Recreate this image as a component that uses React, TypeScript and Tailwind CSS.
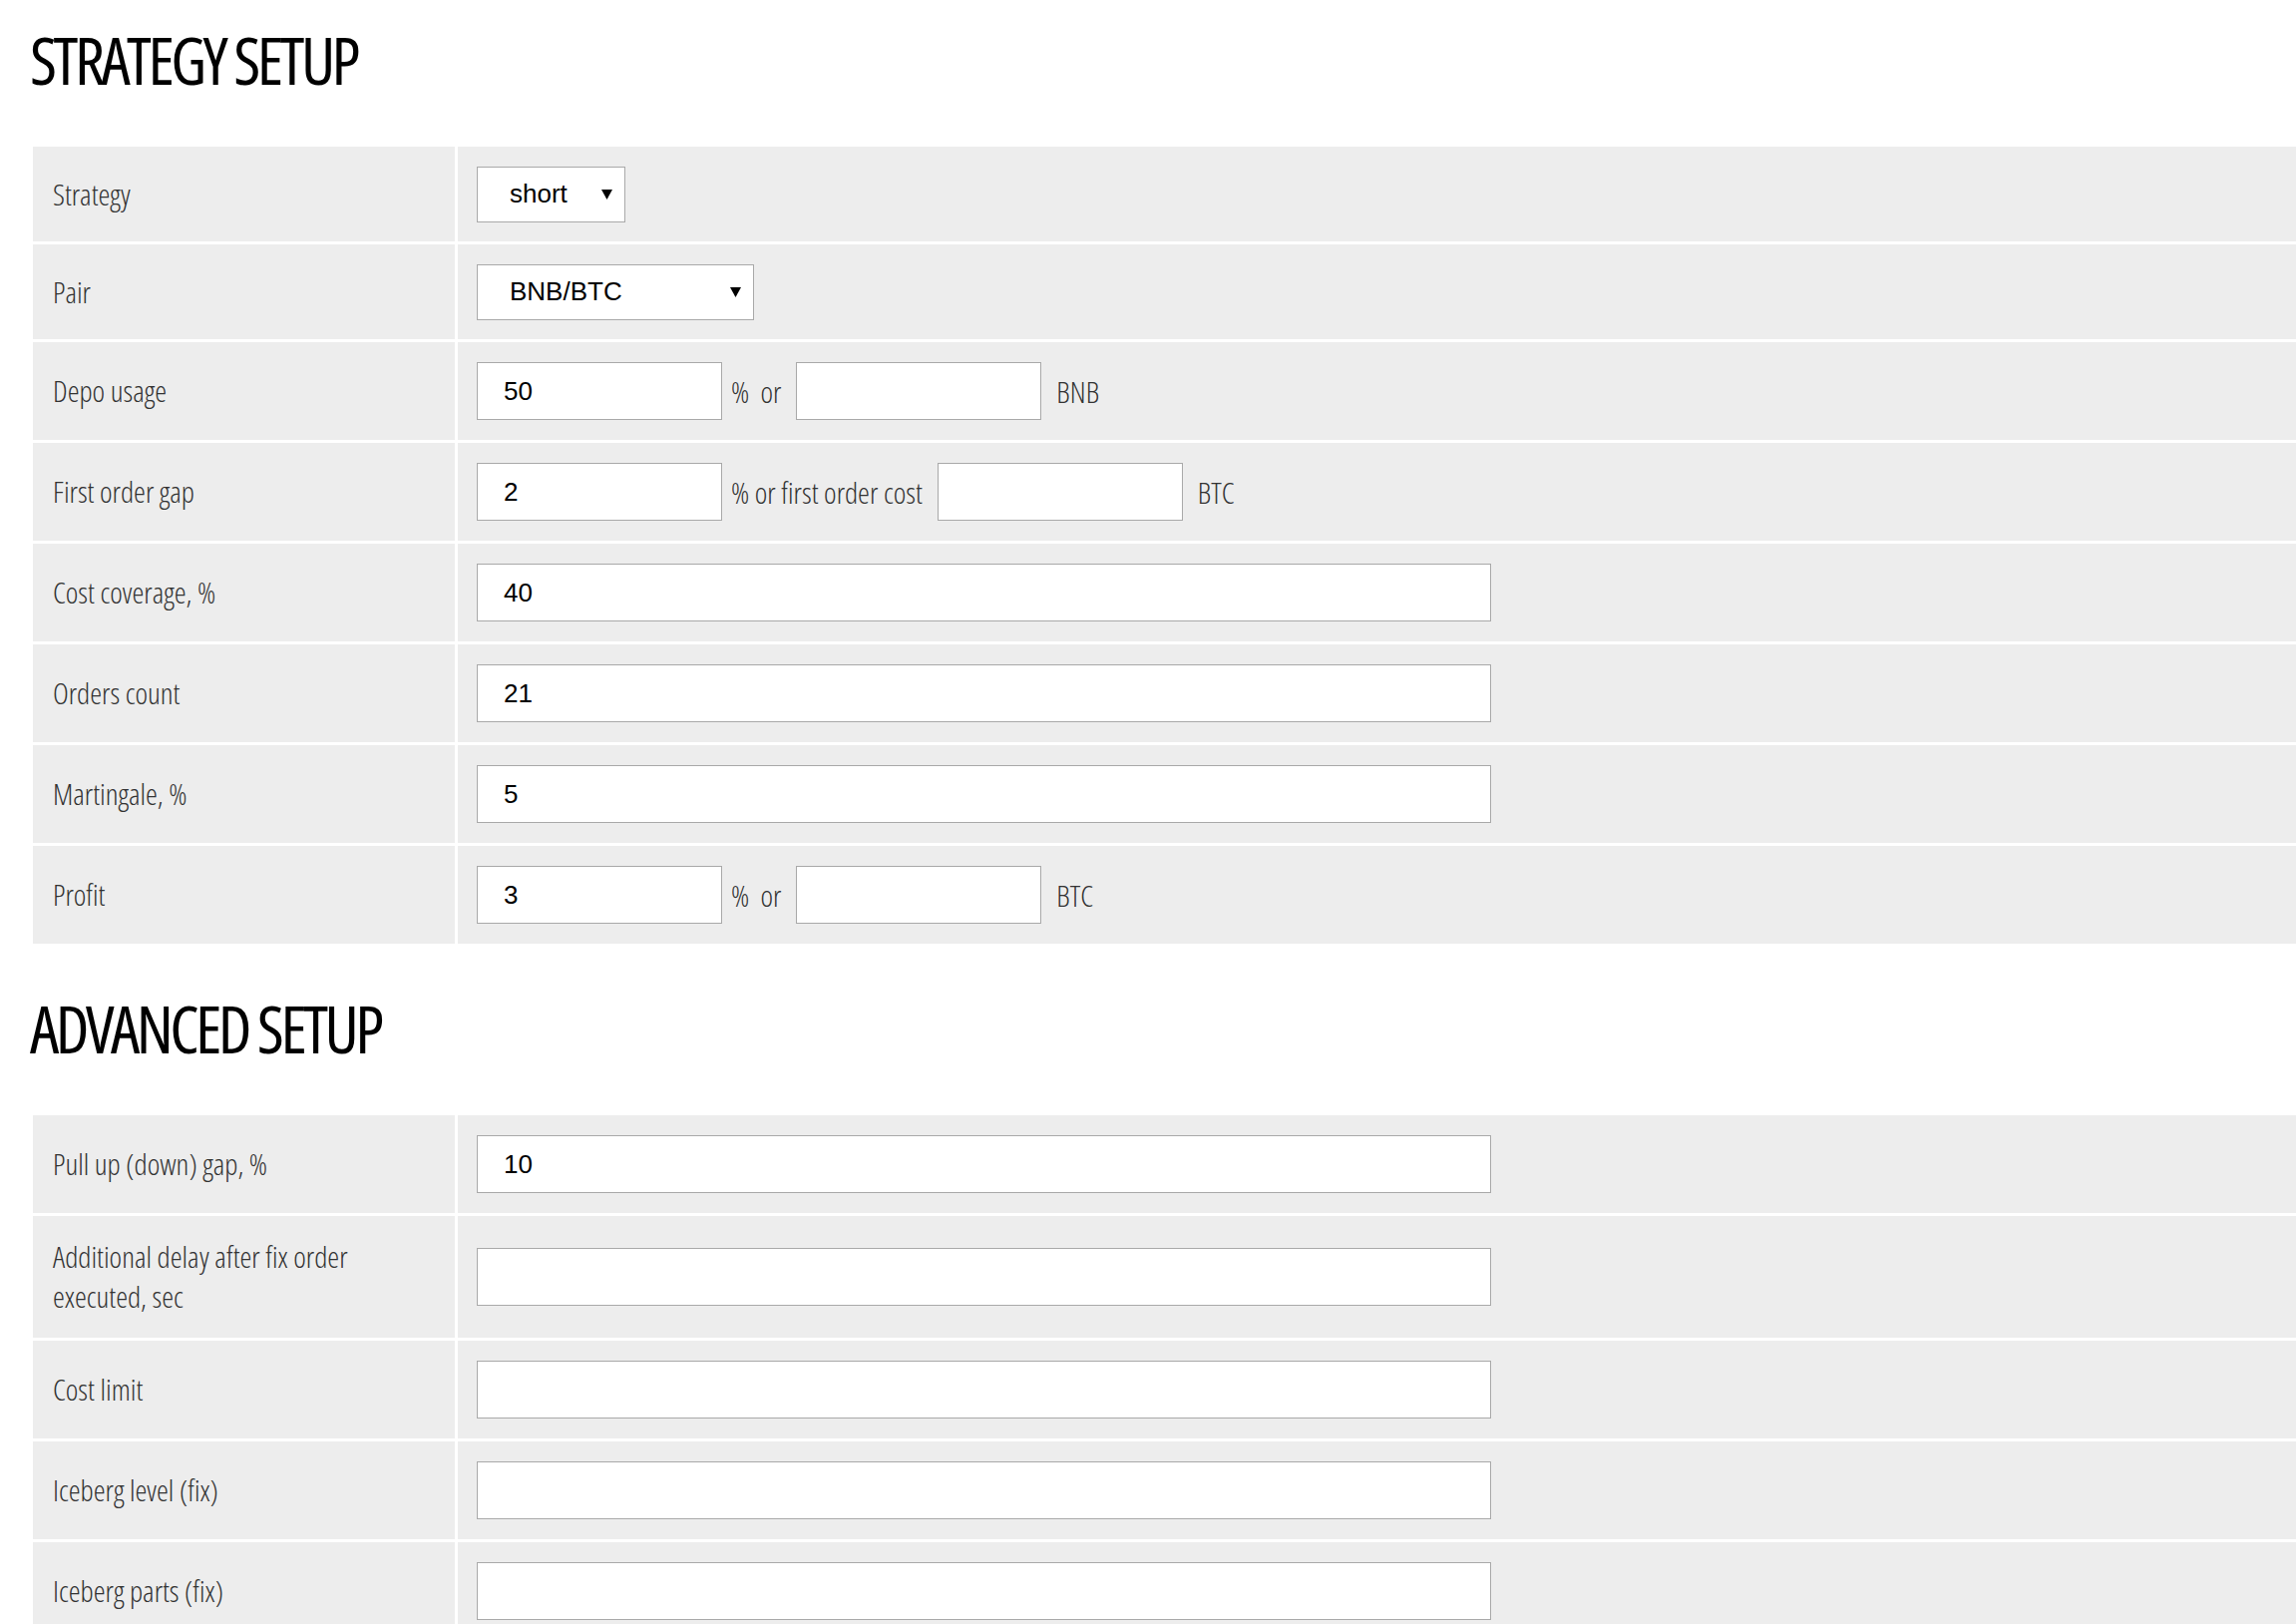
import { useState } from 'react'

const labelFont = "font-['Open_Sans',sans-serif] font-light [font-stretch:condensed]"
const titleFont = "font-['Open_Sans',sans-serif] font-[380] [font-stretch:condensed] tracking-[-3.5px]"
const fieldFont = "font-['Liberation_Sans',Arial,sans-serif]"

type Row =
  | { label: string[]; kind: 'select'; value: string; options: string[]; width: string }
  | { label: string[]; kind: 'pair'; value: string; mid: string; unit: string }
  | { label: string[]; kind: 'wide'; value: string }

const strategyRows: Row[] = [
  { label: ['Strategy'], kind: 'select', value: 'short', options: ['short', 'long'], width: 'w-[149px]' },
  { label: ['Pair'], kind: 'select', value: 'BNB/BTC', options: ['BNB/BTC', 'ETH/BTC'], width: 'w-[278px]' },
  { label: ['Depo usage'], kind: 'pair', value: '50', mid: '%\u00a0 or', unit: 'BNB' },
  { label: ['First order gap'], kind: 'pair', value: '2', mid: '% or first order cost', unit: 'BTC' },
  { label: ['Cost coverage, %'], kind: 'wide', value: '40' },
  { label: ['Orders count'], kind: 'wide', value: '21' },
  { label: ['Martingale, %'], kind: 'wide', value: '5' },
  { label: ['Profit'], kind: 'pair', value: '3', mid: '%\u00a0 or', unit: 'BTC' },
]

const advancedRows: Row[] = [
  { label: ['Pull up (down) gap, %'], kind: 'wide', value: '10' },
  { label: ['Additional delay after fix order', 'executed, sec'], kind: 'wide', value: '' },
  { label: ['Cost limit'], kind: 'wide', value: '' },
  { label: ['Iceberg level (fix)'], kind: 'wide', value: '' },
  { label: ['Iceberg parts (fix)'], kind: 'wide', value: '' },
]

function Field({ value, className }: { value: string; className: string }) {
  const [v, setV] = useState(value)
  return (
    <input
      value={v}
      onChange={(e) => setV(e.target.value)}
      className={`h-[58px] border border-[#a9a9a9] bg-white pl-[26px] text-[26px] text-black outline-none ${fieldFont} ${className}`}
    />
  )
}

function Select({ value, options, width }: { value: string; options: string[]; width: string }) {
  const [v, setV] = useState(value)
  return (
    <div className={`relative h-[56px] ${width}`}>
      <select
        value={v}
        onChange={(e) => setV(e.target.value)}
        className={`h-full w-full appearance-none border border-[#a9a9a9] bg-white pl-[32px] text-[26px] text-black outline-none ${fieldFont}`}
      >
        {options.map((o) => (
          <option key={o}>{o}</option>
        ))}
      </select>
      <svg className="pointer-events-none absolute right-[13px] top-[23px]" width="11" height="10" viewBox="0 0 11 10">
        <polygon points="0,0 11,0 5.5,10" fill="#000" />
      </svg>
    </div>
  )
}

function FormRow({ row }: { row: Row }) {
  const height = row.label.length > 1 ? 'h-[122px]' : row.kind === 'select' ? 'h-[95px]' : 'h-[98px]'
  return (
    <div className={`flex gap-[3px] ${height}`}>
      <div className={`flex w-[423px] shrink-0 flex-col justify-center bg-[#ededed] px-[20px] text-[30px] leading-[40px] text-[#333] ${labelFont}`}>
        {row.label.map((l) => (
          <span key={l}>{l}</span>
        ))}
      </div>
      <div className="flex flex-1 items-center bg-[#ededed] pl-[19px]">
        {row.kind === 'select' && <Select value={row.value} options={row.options} width={row.width} />}
        {row.kind === 'wide' && <Field value={row.value} className="w-[1017px]" />}
        {row.kind === 'pair' && (
          <>
            <Field value={row.value} className="w-[246px]" />
            <span className={`ml-[9px] mr-[15px] whitespace-pre text-[30px] text-[#333] ${labelFont}`}>{row.mid}</span>
            <Field value="" className="w-[246px]" />
            <span className={`ml-[15px] text-[30px] text-[#333] ${labelFont}`}>{row.unit}</span>
          </>
        )}
      </div>
    </div>
  )
}

export default function App() {
  return (
    <div className="min-h-screen overflow-hidden bg-white pl-[33px]">
      <h1 className={`-ml-[3px] mb-[55px] pt-[26px] text-[66px] leading-[66px] text-black ${titleFont}`}>STRATEGY SETUP</h1>
      <div className="flex flex-col gap-[3px]">
        {strategyRows.map((r) => (
          <FormRow key={r.label[0]} row={r} />
        ))}
      </div>

      <h1 className={`-ml-[3px] mb-[55px] mt-[51px] text-[66px] leading-[66px] text-black ${titleFont}`}>ADVANCED SETUP</h1>
      <div className="flex flex-col gap-[3px]">
        {advancedRows.map((r) => (
          <FormRow key={r.label[0]} row={r} />
        ))}
      </div>
    </div>
  )
}
